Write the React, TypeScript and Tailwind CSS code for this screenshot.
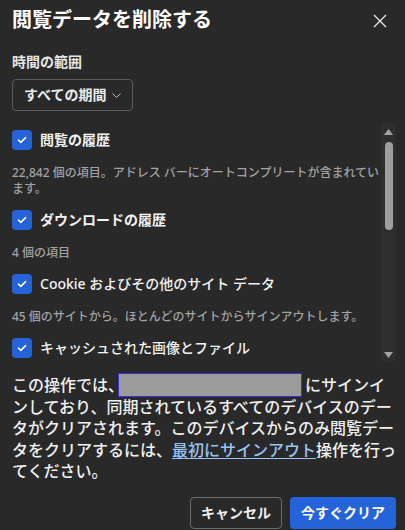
import React from "react";

const font = { fontFamily: '"Noto Sans", "Noto Sans CJK JP", sans-serif' };

function Check() {
  return (
    <div className="w-5 h-5 shrink-0 rounded-[4px] bg-[#2563d9] flex items-center justify-center">
      <svg width="10" height="8" viewBox="0 0 10 8" fill="none">
        <path d="M1.5 4.2 L3.9 6.4 L8.5 1.6" stroke="white" strokeWidth="1.6" strokeLinecap="round" strokeLinejoin="round" />
      </svg>
    </div>
  );
}

function Item({ label, desc, bold }: { label: string; desc?: string; bold?: boolean }) {
  return (
    <div className="flex flex-col">
      <div className="flex items-center h-5">
        <Check />
        <span className={`ml-2 text-[14px] leading-5 text-[#f2f2f2] whitespace-nowrap ${bold ? "font-semibold" : "font-medium"}`}>{label}</span>
      </div>
      {desc && (
        <p className="mt-[15px] mb-[13px] text-[12px] leading-4 text-[#a3a3a3] font-medium">{desc}</p>
      )}
    </div>
  );
}

export default function App() {
  return (
    <div className="w-[405px] h-[530px] bg-[#292929] text-white flex flex-col overflow-hidden" style={font}>
      <div className="flex items-center justify-between pl-3 pr-[18px] pt-[8px]">
        <h1 className="text-[20px] leading-6 font-bold text-white">閲覧データを削除する</h1>
        <svg width="14" height="14" viewBox="0 0 14 14" fill="none" className="mt-[2px]">
          <path d="M1 1 L13 13 M13 1 L1 13" stroke="#e8e8e8" strokeWidth="1.3" />
        </svg>
      </div>
      <div className="px-3 mt-[20px] text-[14px] leading-5 font-semibold text-[#e6e6e6]">時間の範囲</div>
      <div className="px-3 mt-[7px]">
        <div className="w-[121px] h-[32px] border border-[#5c5c5c] rounded-[4px] flex items-center pl-[11px] pr-[11px] justify-between">
          <span className="text-[14px] font-semibold text-[#ececec] leading-5">すべての期間</span>
          <svg width="9" height="5" viewBox="0 0 9 5" fill="none">
            <path d="M0.5 0.5 L4.5 4.5 L8.5 0.5" stroke="#bdbdbd" strokeWidth="1" />
          </svg>
        </div>
      </div>
      <div className="mt-[12px] h-[238px] flex pl-3 pr-[9px] overflow-hidden">
        <div className="flex-1 pt-[7px] overflow-hidden pr-0">
          <Item label="閲覧の履歴" bold desc="22,842 個の項目。アドレス バーにオートコンプリートが含まれています。" />
          <Item label="ダウンロードの履歴" bold desc="4 個の項目" />
          <Item label="Cookie およびその他のサイト データ" desc="45 個のサイトから。ほとんどのサイトからサインアウトします。" />
          <Item label="キャッシュされた画像とファイル" />
        </div>
        <div className="w-[15px] shrink-0 bg-[#2e2e2e] flex flex-col items-center pt-[6px] pb-[3px]">
          <svg width="9" height="6" viewBox="0 0 9 6"><path d="M4.5 0 L9 6 L0 6 Z" fill="#a3a3a3" /></svg>
          <div className="mt-[7px] w-[8px] h-[88px] rounded-full bg-[#9f9f9f]" />
          <div className="flex-1" />
          <svg width="9" height="6" viewBox="0 0 9 6"><path d="M0 0 L9 0 L4.5 6 Z" fill="#a3a3a3" /></svg>
        </div>
      </div>
      <p className="pl-3 pr-2 mt-[14px] text-[16px] leading-[21.5px] font-medium text-[#f0f0f0]">
        この操作では、
        <span className="inline-block align-middle w-[184px] h-[24px] bg-[#9b9b9b] border-[1.5px] border-[#3a2de0] -ml-[6px] mr-[3px] -mt-[4px]" />
        にサインインしており、同期されているすべてのデバイスのデータがクリアされます。このデバイスからのみ閲覧データをクリアするには、
        <a className="text-[#99c3f5] underline underline-offset-2">最初にサインアウト</a>
        操作を行ってください。
      </p>
      <div className="flex justify-end gap-2 pr-[9px] mt-[14px]">
        <button className="w-[92px] h-[32px] border border-[#6b6b6b] rounded-[4px] text-[14px] font-semibold text-[#f0f0f0]">キャンセル</button>
        <button className="w-[106px] h-[32px] bg-[#2563d9] rounded-[4px] text-[14px] font-semibold text-white">今すぐクリア</button>
      </div>
    </div>
  );
}
